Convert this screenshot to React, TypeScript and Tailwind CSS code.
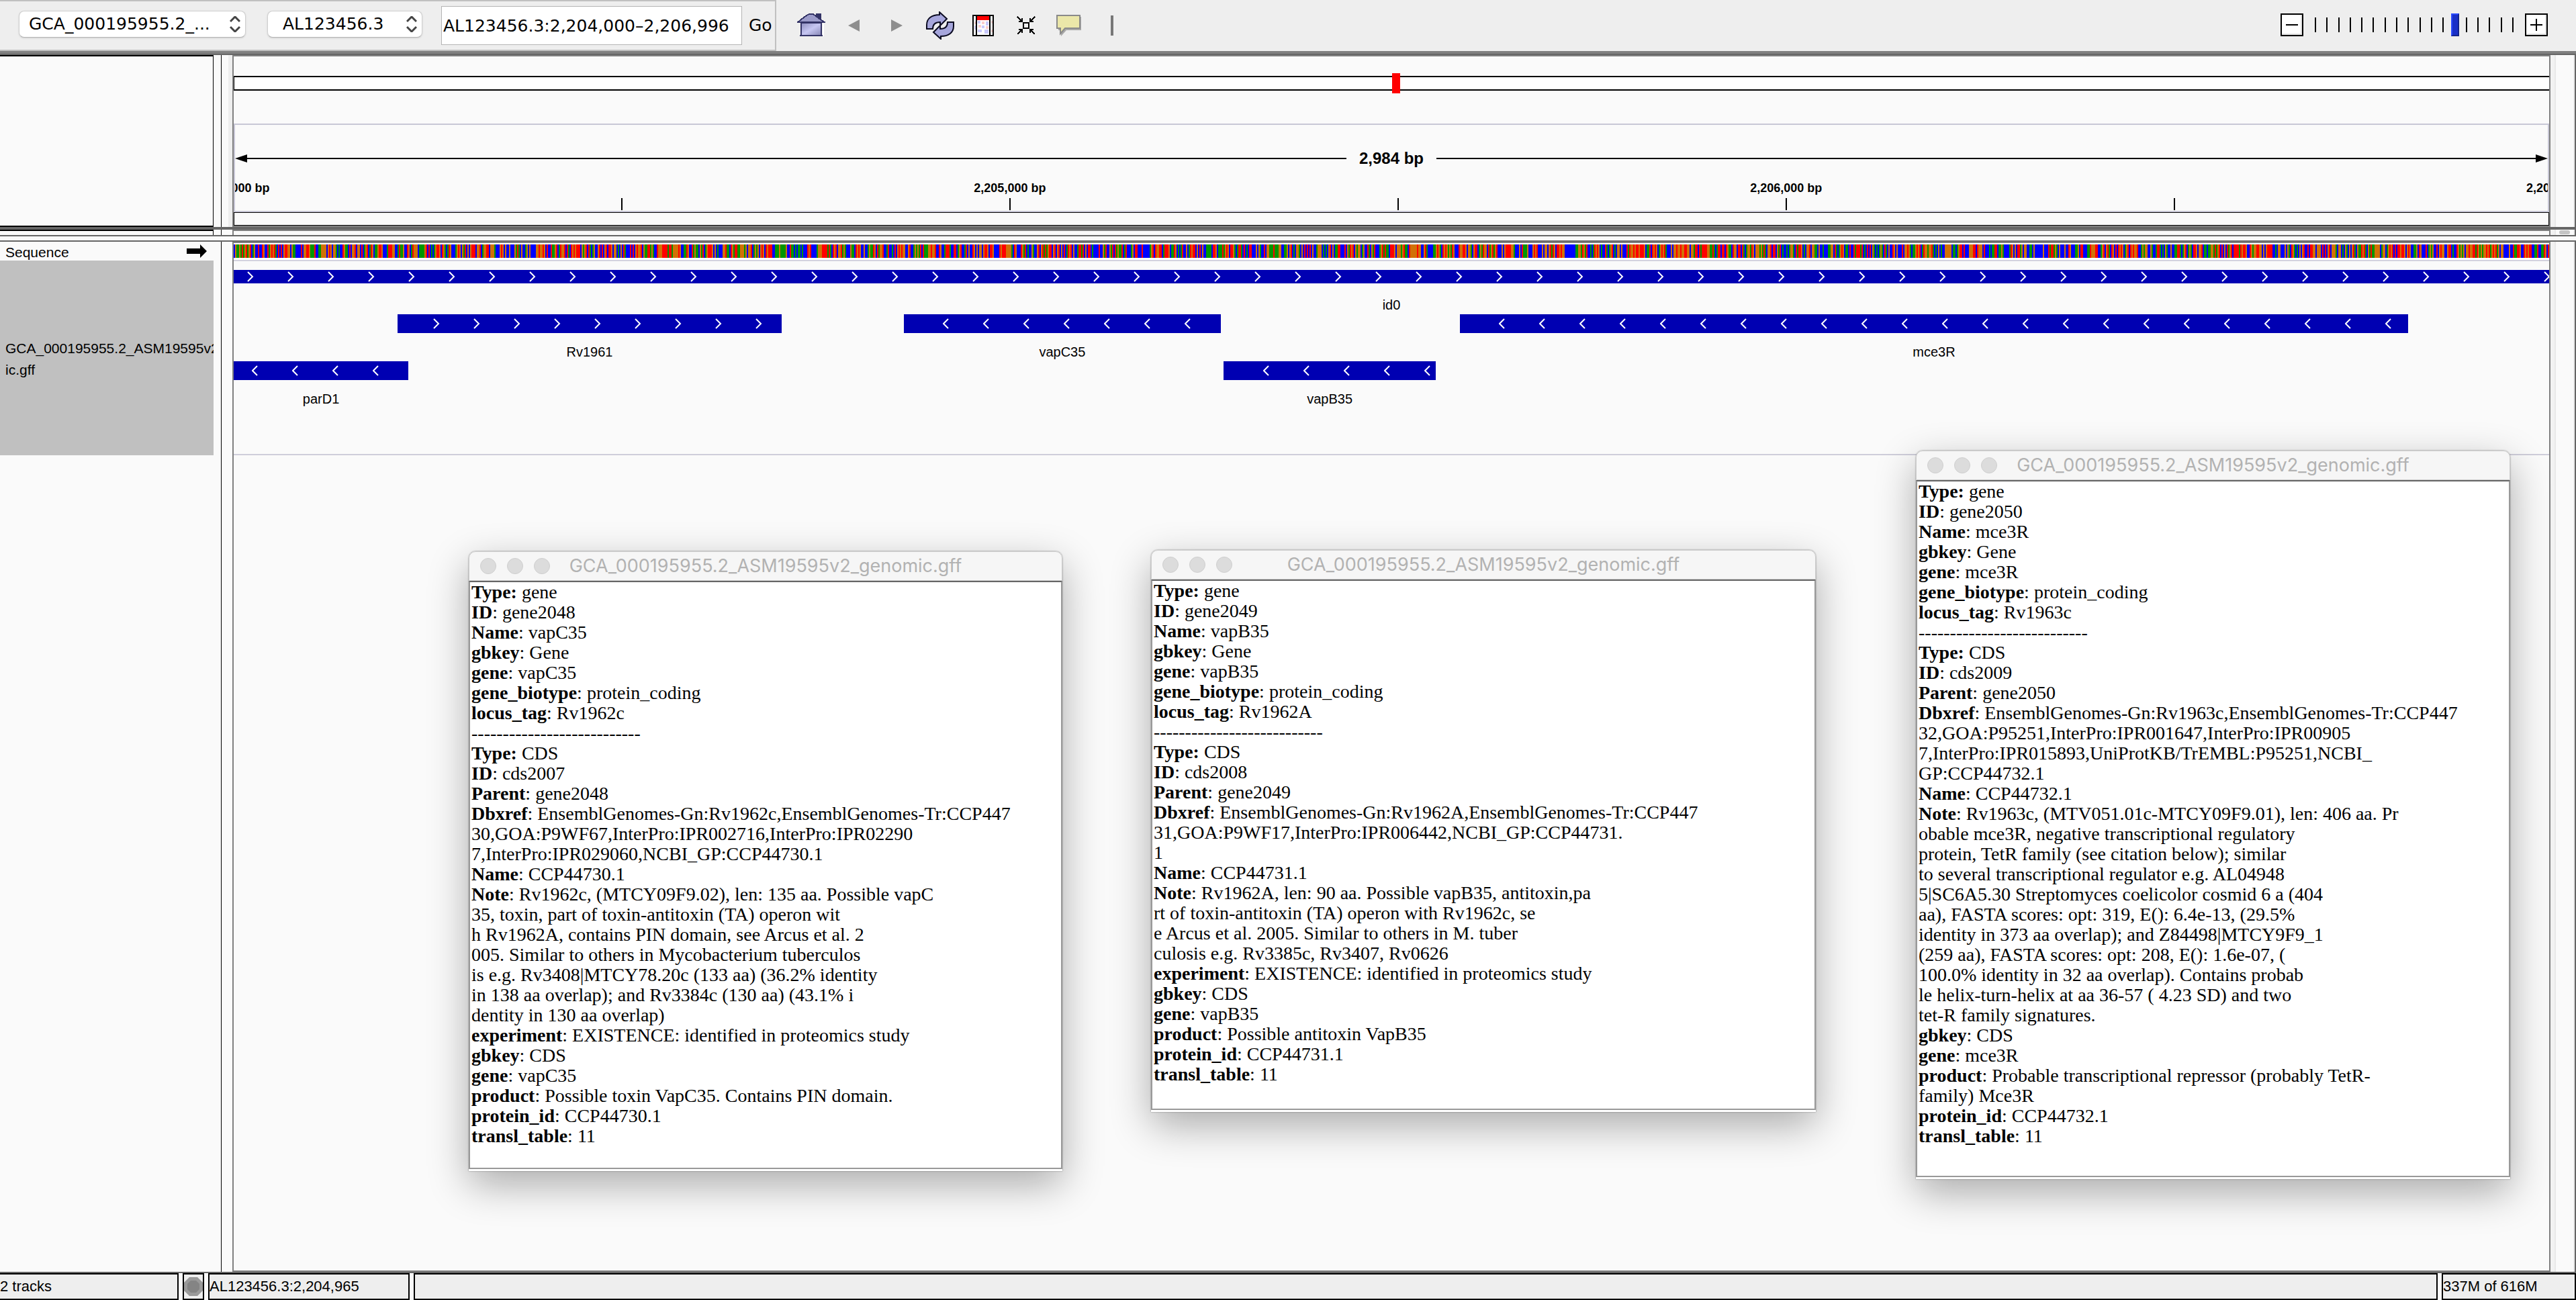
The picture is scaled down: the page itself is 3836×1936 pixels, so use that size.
import { useState } from "react";
import type { ReactNode } from "react";

/* ---------- genome data ---------- */

const VIEW_START = 2204000;
const VIEW_LENGTH = 2983;

type Strand = "+" | "-";

interface Feature {
  name: string;
  start: number;
  end: number;
  strand: Strand;
  /** distance in pixels from the bar's left edge to the first arrow */
  phase: number;
  thin?: boolean;
}

const LANES: Feature[][] = [
  [{ name: "id0", start: 0, end: 2983, strand: "+", phase: 20, thin: true }],
  [
    { name: "Rv1961", start: 211, end: 706, strand: "+", phase: 53 },
    { name: "vapC35", start: 863, end: 1272, strand: "-", phase: 58 },
    { name: "mce3R", start: 1580, end: 2801, strand: "-", phase: 58 },
  ],
  [
    { name: "parD1", start: 0, end: 225, strand: "-", phase: 27 },
    { name: "vapB35", start: 1275, end: 1549, strand: "-", phase: 59 },
  ],
];

const MAJOR_TICKS = [0, 1000, 2000, 3000];
const TICKS = [500, 1000, 1500, 2000, 2500];

const pct = (bp: number) => `${(bp / VIEW_LENGTH) * 100}%`;

/* ---------- pop-up data ---------- */

type Row = [string, string] | null;

interface Popup {
  place: string;
  bottom: string;
  rows: Row[];
}

const POPUPS: Popup[] = [
  {
    place: "left-[698px] top-[821px] w-[884px]",
    bottom: "pb-8",
    rows: [
      ["Type:", "gene"],
      ["ID", "gene2048"],
      ["Name", "vapC35"],
      ["gbkey", "Gene"],
      ["gene", "vapC35"],
      ["gene_biotype", "protein_coding"],
      ["locus_tag", "Rv1962c"],
      null,
      ["Type:", "CDS"],
      ["ID", "cds2007"],
      ["Parent", "gene2048"],
      [
        "Dbxref",
        "EnsemblGenomes-Gn:Rv1962c,EnsemblGenomes-Tr:CCP447\n30,GOA:P9WF67,InterPro:IPR002716,InterPro:IPR02290\n7,InterPro:IPR029060,NCBI_GP:CCP44730.1",
      ],
      ["Name", "CCP44730.1"],
      [
        "Note",
        "Rv1962c, (MTCY09F9.02), len: 135 aa. Possible vapC\n35, toxin, part of toxin-antitoxin (TA) operon wit\nh Rv1962A, contains PIN domain, see Arcus et al. 2\n005. Similar to others in Mycobacterium tuberculos\nis e.g. Rv3408|MTCY78.20c (133 aa) (36.2% identity\nin 138 aa overlap); and Rv3384c (130 aa) (43.1% i\ndentity in 130 aa overlap)",
      ],
      ["experiment", "EXISTENCE: identified in proteomics study"],
      ["gbkey", "CDS"],
      ["gene", "vapC35"],
      ["product", "Possible toxin VapC35. Contains PIN domain."],
      ["protein_id", "CCP44730.1"],
      ["transl_table", "11"],
    ],
  },
  {
    place: "left-[1714px] top-[819px] w-[990px]",
    bottom: "pb-9",
    rows: [
      ["Type:", "gene"],
      ["ID", "gene2049"],
      ["Name", "vapB35"],
      ["gbkey", "Gene"],
      ["gene", "vapB35"],
      ["gene_biotype", "protein_coding"],
      ["locus_tag", "Rv1962A"],
      null,
      ["Type:", "CDS"],
      ["ID", "cds2008"],
      ["Parent", "gene2049"],
      [
        "Dbxref",
        "EnsemblGenomes-Gn:Rv1962A,EnsemblGenomes-Tr:CCP447\n31,GOA:P9WF17,InterPro:IPR006442,NCBI_GP:CCP44731.\n1",
      ],
      ["Name", "CCP44731.1"],
      [
        "Note",
        "Rv1962A, len: 90 aa. Possible vapB35, antitoxin,pa\nrt of toxin-antitoxin (TA) operon with Rv1962c, se\ne Arcus et al. 2005. Similar to others in M. tuber\nculosis e.g. Rv3385c, Rv3407, Rv0626",
      ],
      ["experiment", "EXISTENCE: identified in proteomics study"],
      ["gbkey", "CDS"],
      ["gene", "vapB35"],
      ["product", "Possible antitoxin VapB35"],
      ["protein_id", "CCP44731.1"],
      ["transl_table", "11"],
    ],
  },
  {
    place: "left-[2853px] top-[671px] w-[885px]",
    bottom: "pb-11",
    rows: [
      ["Type:", "gene"],
      ["ID", "gene2050"],
      ["Name", "mce3R"],
      ["gbkey", "Gene"],
      ["gene", "mce3R"],
      ["gene_biotype", "protein_coding"],
      ["locus_tag", "Rv1963c"],
      null,
      ["Type:", "CDS"],
      ["ID", "cds2009"],
      ["Parent", "gene2050"],
      [
        "Dbxref",
        "EnsemblGenomes-Gn:Rv1963c,EnsemblGenomes-Tr:CCP447\n32,GOA:P95251,InterPro:IPR001647,InterPro:IPR00905\n7,InterPro:IPR015893,UniProtKB/TrEMBL:P95251,NCBI_\nGP:CCP44732.1",
      ],
      ["Name", "CCP44732.1"],
      [
        "Note",
        "Rv1963c, (MTV051.01c-MTCY09F9.01), len: 406 aa. Pr\nobable mce3R, negative transcriptional regulatory\nprotein, TetR family (see citation below); similar\nto several transcriptional regulator e.g. AL04948\n5|SC6A5.30 Streptomyces coelicolor cosmid 6 a (404\naa), FASTA scores: opt: 319, E(): 6.4e-13, (29.5%\nidentity in 373 aa overlap); and Z84498|MTCY9F9_1\n(259 aa), FASTA scores: opt: 208, E(): 1.6e-07, (\n100.0% identity in 32 aa overlap). Contains probab\nle helix-turn-helix at aa 36-57 ( 4.23 SD) and two\ntet-R family signatures.",
      ],
      ["gbkey", "CDS"],
      ["gene", "mce3R"],
      ["product", "Probable transcriptional repressor (probably TetR-\nfamily) Mce3R"],
      ["protein_id", "CCP44732.1"],
      ["transl_table", "11"],
    ],
  },
];

/* ---------- sequence strip ---------- */

const BASES = [
  { base: "C", color: "#0000ff", share: 0.31 },
  { base: "G", color: "#d17105", share: 0.27 },
  { base: "T", color: "#ff0000", share: 0.22 },
  { base: "A", color: "#009600", share: 0.2 },
];

const STRIP_CELLS = 1724;

function buildStrip() {
  const paths = BASES.map(() => "");
  let seed = 19595;
  for (let i = 0; i < STRIP_CELLS; i++) {
    seed = (seed * 1103515245 + 12345) % 2147483648;
    let r = Math.floor(seed / 65536) / 32768;
    let k = 0;
    while (k < BASES.length - 1 && r > BASES[k].share) {
      r -= BASES[k].share;
      k++;
    }
    paths[k] += `M${i * 2} 0h2v20h-2z`;
  }
  return paths;
}

const STRIP = buildStrip();

function SequenceStrip() {
  return (
    <svg
      className="block h-5 w-full"
      viewBox="0 0 3448 20"
      preserveAspectRatio="none"
      shapeRendering="crispEdges"
      role="img"
      aria-label="Sequence"
    >
      {STRIP.map((d, i) => (
        <path key={BASES[i].base} d={d} fill={BASES[i].color} />
      ))}
    </svg>
  );
}

/* ---------- toolbar ---------- */

function HomeIcon() {
  return (
    <svg width="42" height="36" viewBox="0 0 42 36" shapeRendering="crispEdges">
      <defs>
        <linearGradient id="wall" x1="0" y1="0" x2="1" y2="1">
          <stop offset="0" stopColor="#8d8dbd" />
          <stop offset="0.5" stopColor="#c6c6f2" />
          <stop offset="1" stopColor="#8585b3" />
        </linearGradient>
      </defs>
      <path d="M28 0h8v10h-8z" fill="#333366" />
      <path d="M18 1h6l4 3 4 3 4 3 5 3H1l5-4 4-3 4-3z" fill="#9a9ac8" stroke="#333366" strokeWidth="2" />
      <path d="M0 12h42v2H0z" fill="#333366" />
      <path d="M6 14h30v19H6z" fill="url(#wall)" stroke="#333366" strokeWidth="2" />
      <path d="M4 32h34v2H4z" fill="#333366" />
      <path d="M38 15h2v19h-2z" fill="#ffffff" />
    </svg>
  );
}

function TriangleIcon({ back }: { back?: boolean }) {
  return (
    <svg width="17" height="18" viewBox="0 0 17 18">
      <path d={back ? "M17 0v18L0 9z" : "M0 0v18l17-9z"} fill="#8e8e8e" />
    </svg>
  );
}

function RefreshIcon() {
  const arrow = "M1 26V20C1 10 9 5 20 5V1L31 11 21 21V16C14 16 10 19 10 26Z";
  return (
    <svg width="42" height="42" viewBox="0 0 42 42">
      <g fill="#a6a6dc" stroke="#0a0a20" strokeWidth="2">
        <path d={arrow} />
        <path d={arrow} transform="rotate(180 21 21)" />
      </g>
    </svg>
  );
}

function RegionIcon() {
  return (
    <svg width="32" height="32" viewBox="0 0 32 32" shapeRendering="crispEdges">
      <path d="M1 1h30v30H1z" fill="#ffffff" stroke="#000" strokeWidth="2" />
      <path d="M8 9h4v4H8zM14 16h4v4h-4zM20 10h4v6h-4zM8 22h6v4H8zM18 22h6v6h-6zM3 16h2v6H3z" fill="#c9c9fb" />
      <path d="M14 10h4v4h-4zM9 15h4v4H9zM20 17h4v4h-4zM3 10h2v4H3zM28 22h2v4h-2zM28 9h2v4h-2z" fill="#f9cccc" />
      <path d="M6 1v30M26 1v30" stroke="#000" strokeWidth="2" />
      <path d="M7 2h18v6H7z" fill="#ff0000" />
    </svg>
  );
}

function FitIcon() {
  return (
    <svg width="28" height="28" viewBox="0 0 28 28" shapeRendering="crispEdges">
      <path d="M10 10h8v8h-8z" fill="none" stroke="#000" strokeWidth="2" />
      <path
        d="M1 1l7 7M27 1l-7 7M1 27l7-7M27 27l-7-7M3 8h5V3M25 8h-5V3M3 20h5v5M25 20h-5v5"
        fill="none"
        stroke="#000"
        strokeWidth="2"
      />
    </svg>
  );
}

function BubbleIcon() {
  return (
    <svg width="40" height="34" viewBox="0 0 40 34">
      <path d="M4 4h34v20H16l-8 9v-9H4z" fill="#a9a9a9" />
      <path d="M2 2h34v19H14l-7 8v-8H2z" fill="#ebe7a9" stroke="#8a8a8a" strokeWidth="2" />
    </svg>
  );
}

function ToolButton({ label, children }: { label: string; children: ReactNode }) {
  return (
    <button type="button" aria-label={label} className="flex h-16 w-16 items-center justify-center">
      {children}
    </button>
  );
}

function Combo({ label, value, width, pad }: { label: string; value: string; width: string; pad: string }) {
  return (
    <div className={`relative ${width}`}>
      <select
        aria-label={label}
        className={`h-10 w-full appearance-none rounded-lg border border-[#cfcfcf] border-b-[#b5b5b5] bg-white shadow-sm ${pad}`}
      >
        <option>{value}</option>
      </select>
      <svg
        className="pointer-events-none absolute right-2 top-2 h-6 w-4"
        viewBox="0 0 16 24"
        fill="none"
        stroke="#444"
        strokeWidth="3"
      >
        <path d="M1 8l7-7 7 7M1 16l7 7 7-7" />
      </svg>
    </div>
  );
}

function ZoomButton({ label, path }: { label: string; path: string }) {
  return (
    <button
      type="button"
      aria-label={label}
      className="flex size-[34px] items-center justify-center border-2 border-black bg-white shadow-[inset_-2px_-2px_0_#e2e2e2]"
    >
      <svg width="18" height="18" viewBox="0 0 18 18" stroke="#000" strokeWidth="2" shapeRendering="crispEdges">
        <path d={path} />
      </svg>
    </button>
  );
}

function ZoomControl() {
  const [zoom, setZoom] = useState(12);
  return (
    <div className="mb-0.5 mr-[42px] flex items-center gap-3">
      <ZoomButton label="Zoom out" path="M0 9h18" />
      <div className="relative h-[34px] w-[306px]">
        <div className="flex h-full items-center justify-between px-[5px]">
          {Array.from({ length: 18 }, (_, i) => (
            <span key={i} className="h-[22px] w-0.5 bg-black" />
          ))}
        </div>
        <input
          type="range"
          aria-label="Zoom level"
          min={0}
          max={17}
          value={zoom}
          onChange={(e) => setZoom(Number(e.target.value))}
          className="absolute inset-0 h-full w-full appearance-none bg-transparent [&::-webkit-slider-thumb]:h-[34px] [&::-webkit-slider-thumb]:w-3 [&::-webkit-slider-thumb]:appearance-none [&::-webkit-slider-thumb]:border-2 [&::-webkit-slider-thumb]:border-b-[#14248c] [&::-webkit-slider-thumb]:border-l-[#2a4bff] [&::-webkit-slider-thumb]:border-r-[#14248c] [&::-webkit-slider-thumb]:border-t-[#2a4bff] [&::-webkit-slider-thumb]:bg-[#1a30c8]"
        />
      </div>
      <ZoomButton label="Zoom in" path="M0 9h18M9 0v18" />
    </div>
  );
}

function Toolbar() {
  return (
    <header className="flex h-[76px] shrink-0 items-center justify-between bg-[#eeeeee]">
      <div className="flex h-full items-center">
        <div className="flex h-full items-center border-y-2 border-r-2 border-[#c0c0c0] pl-7 pr-1 font-['DejaVu_Sans',sans-serif] text-[25px] text-black">
          <div className="mb-1 flex items-center gap-8">
            <Combo label="Genome" value="GCA_000195955.2_..." width="w-[338px]" pad="pl-3.5" />
            <Combo label="Chromosome" value="AL123456.3" width="w-[231px]" pad="pl-5.5" />
          </div>
          <input
            type="text"
            aria-label="Locus"
            defaultValue="AL123456.3:2,204,000–2,206,996"
            className="ml-7 h-[58px] w-[448px] border border-[#b4b4b4] bg-white pl-0.5"
          />
          <button type="button" className="ml-2.5">
            Go
          </button>
        </div>
        <div className="ml-5 flex items-center">
          <ToolButton label="Home">
            <HomeIcon />
          </ToolButton>
          <ToolButton label="Back">
            <TriangleIcon back />
          </ToolButton>
          <ToolButton label="Forward">
            <TriangleIcon />
          </ToolButton>
          <ToolButton label="Refresh">
            <RefreshIcon />
          </ToolButton>
          <ToolButton label="Define region">
            <RegionIcon />
          </ToolButton>
          <ToolButton label="Fit to window">
            <FitIcon />
          </ToolButton>
          <ToolButton label="Pop-up text">
            <BubbleIcon />
          </ToolButton>
          <ToolButton label="Ruler line">
            <span className="h-[30px] w-1 bg-[#777777]" />
          </ToolButton>
        </div>
      </div>
      <ZoomControl />
    </header>
  );
}

/* ---------- panes ---------- */

interface PaneProps {
  side: ReactNode;
  track: ReactNode;
  scroll?: ReactNode;
  className?: string;
  trackClass?: string;
  gutterClass?: string;
}

function Pane({ side, track, scroll, className = "", trackClass = "", gutterClass = "" }: PaneProps) {
  return (
    <div className={`flex border-r-2 border-[#666666] ${className}`}>
      <div className="flex w-[318px] shrink-0 flex-col">{side}</div>
      <div className="w-3 shrink-0 border-r border-black" />
      <div className={`w-4 shrink-0 ${gutterClass}`} />
      <div className={`min-w-0 flex-1 border-x-2 border-t-2 border-[#808080] ${trackClass}`}>{track}</div>
      <div className="flex w-9 shrink-0">
        <div className="w-2 border-r-2 border-[#e8e8e8] bg-[#f2f2f2]" />
        <div className="flex flex-1 items-center justify-center border-r-2 border-[#eeeeee]">{scroll}</div>
      </div>
    </div>
  );
}

function ArrowHead({ left }: { left?: boolean }) {
  return (
    <svg className="shrink-0" width="18" height="12" viewBox="0 0 18 12">
      <path d={left ? "M18 0v12L0 6z" : "M0 0v12l18-6z"} fill="#000" />
    </svg>
  );
}

function Ruler() {
  return (
    <div className="h-[132px] overflow-hidden border-2 border-[#c8c7d6] pt-9 font-bold text-black">
      <div className="flex h-7 items-center">
        <ArrowHead left />
        <span className="h-0.5 flex-1 bg-black" />
        <span className="w-[134px] text-center text-2xl leading-7">2,984 bp</span>
        <span className="h-0.5 flex-1 bg-black" />
        <ArrowHead />
      </div>
      <div className="relative -mx-0.5 mt-5 h-5 text-lg leading-5">
        {MAJOR_TICKS.map((bp) => (
          <span
            key={bp}
            className="absolute -translate-x-1/2 whitespace-nowrap"
            style={{ left: pct(bp) }}
          >
            {(VIEW_START + bp).toLocaleString("en-US")} bp
          </span>
        ))}
      </div>
      <div className="relative -mx-0.5 mt-[5px] h-[18px]">
        {TICKS.map((bp) => (
          <span key={bp} className="absolute h-full w-0.5 -translate-x-1/2 bg-black" style={{ left: pct(bp) }} />
        ))}
      </div>
    </div>
  );
}

function HeaderTrack() {
  return (
    <>
      <div className="relative mt-[29px] h-[22px] border-y-2 border-l border-black bg-white">
        <span className="absolute -top-1.5 left-1/2 h-[30px] w-3 bg-[#ff0000]" />
      </div>
      <div className="mt-[49px]">
        <Ruler />
      </div>
      <div className="h-5 border border-black" />
    </>
  );
}

function FeatureBar({ feature }: { feature: Feature }) {
  const { name, start, end, strand, phase, thin } = feature;
  return (
    <div
      className="absolute inset-y-0 flex flex-col items-center"
      style={{ left: pct(start), width: pct(end - start) }}
    >
      <div className="flex h-7 w-full items-center">
        <div className={`flex w-full items-center bg-[#0000b2] ${thin ? "h-5" : "h-7"}`}>
          <svg className="block h-4 w-full" aria-hidden="true">
            <defs>
              <pattern id={`arrows-${name}`} x={phase} y="0" width="60" height="16" patternUnits="userSpaceOnUse">
                <path
                  d={strand === "+" ? "M1 1l7 7-7 7" : "M8 1L1 8l7 7"}
                  fill="none"
                  stroke="#fff"
                  strokeWidth="2"
                />
              </pattern>
            </defs>
            <rect x={phase} width="100%" height="16" fill={`url(#arrows-${name})`} />
          </svg>
        </div>
      </div>
      <span className="mt-4 text-xl leading-6 text-black">{name}</span>
    </div>
  );
}

function DataTrack() {
  return (
    <>
      <div className="border-b-2 border-[#d3d2de] bg-white pb-[3px] pt-0.5">
        <SequenceStrip />
      </div>
      <div className="h-[289px] border-b-2 border-[#cfceda] pt-[9px]">
        {LANES.map((lane, i) => (
          <div key={i} className="relative h-[70px] overflow-x-clip">
            {lane.map((f) => (
              <FeatureBar key={f.name} feature={f} />
            ))}
          </div>
        ))}
      </div>
    </>
  );
}

function TrackNames() {
  return (
    <div className="text-[21px] text-black">
      <div className="flex h-7 items-center justify-between pl-2 pr-2.5">
        <span className="pt-1 leading-6">Sequence</span>
        <svg width="30" height="20" viewBox="0 0 30 20">
          <path d="M0 6h20V0l10 10-10 10v-6H0z" fill="#000" />
        </svg>
      </div>
      <div className="flex h-[290px] flex-col justify-center overflow-hidden whitespace-nowrap bg-[#c0c0c0] pl-2 pt-1 leading-8">
        <span>GCA_000195955.2_ASM19595v2_genom</span>
        <span>ic.gff</span>
      </div>
    </div>
  );
}

/* ---------- pop-up windows ---------- */

function PopupWindow({ popup }: { popup: Popup }) {
  return (
    <section
      className={`absolute rounded-t-[10px] bg-white shadow-[0_0_2px_rgba(0,0,0,0.5),0_20px_60px_rgba(0,0,0,0.32)] ${popup.place}`}
    >
      <div className="relative flex h-11 items-center justify-center rounded-t-[10px] border border-[#cdcdcd] bg-[#f6f6f6]">
        <div className="absolute left-4 flex gap-4">
          {["Close", "Minimise", "Zoom"].map((name) => (
            <button
              key={name}
              type="button"
              aria-label={name}
              className="size-6 rounded-full border border-[#cfcfcf] bg-[#dcdcdc]"
            />
          ))}
        </div>
        <h2 className="font-['Inter',sans-serif] text-[27px] leading-8 text-[#b2b2b2]">
          GCA_000195955.2_ASM19595v2_genomic.gff
        </h2>
      </div>
      <div
        className={`mb-[3px] whitespace-pre border-2 border-[#999999] border-t-[#666666] pl-0.5 font-['Liberation_Serif',serif] text-[28px] leading-[30px] text-black ${popup.bottom}`}
      >
        {popup.rows.map((row, i) =>
          row ? (
            <p key={i}>
              <b>{row[0]}</b>
              {row[0].endsWith(":") ? " " : ": "}
              {row[1]}
            </p>
          ) : (
            <p key={i}>---------------------------</p>
          ),
        )}
      </div>
    </section>
  );
}

/* ---------- status bar ---------- */

function StatusBar() {
  const cell = "border-2 border-black bg-[#eeeeee]";
  return (
    <footer className="flex h-10 shrink-0 gap-1.5 text-[22px] leading-9 text-black">
      <div className={`w-[266px] border-l-0 ${cell}`}>2 tracks</div>
      <div className={`flex w-8 items-center justify-center ${cell}`}>
        <svg width="28" height="28" viewBox="0 0 28 28">
          <path d="M8 0h12l8 8v12l-8 8H8l-8-8V8z" fill="#9a9a9a" />
          <path d="M10 5h8l5 5v8l-5 5h-8l-5-5v-8z" fill="#848484" />
        </svg>
      </div>
      <div className={`w-[300px] ${cell}`}>AL123456.3:2,204,965</div>
      <div className={`flex-1 ${cell}`} />
      <div className={`w-[200px] ${cell}`}>337M of 616M</div>
    </footer>
  );
}

export default function App() {
  return (
    <div className="relative flex h-screen flex-col overflow-hidden bg-[#fafafa] font-['Liberation_Sans',Arial,sans-serif]">
      <Toolbar />
      <main className="flex min-h-0 flex-1 flex-col border-t-4 border-[#808080]">
        <div className="h-0.5 shrink-0 bg-[#666666]" />
        <Pane
          className="h-64 shrink-0"
          trackClass="border-b-2"
          gutterClass="border-r-[6px] border-[#eeeeee]"
          side={<div className="flex-1 border-y-2 border-r border-black" />}
          track={<HeaderTrack />}
        />
        <div className="h-1 shrink-0 bg-[#666666]" />
        <Pane
          className="h-2 shrink-0"
          side={<div className="flex-1 border-r border-t-2 border-black" />}
          track={null}
          scroll={<span className="h-1.5 w-4 rounded-full bg-[#c4c4c4]" />}
        />
        <div className="h-2.5 shrink-0 border-y-2 border-[#666666]" />
        <Pane className="min-h-0 flex-1" trackClass="border-b-2" side={<TrackNames />} track={<DataTrack />} />
        <div className="h-0.5 shrink-0 bg-[#666666]" />
      </main>
      <StatusBar />
      {POPUPS.map((popup) => (
        <PopupWindow key={popup.place} popup={popup} />
      ))}
    </div>
  );
}
